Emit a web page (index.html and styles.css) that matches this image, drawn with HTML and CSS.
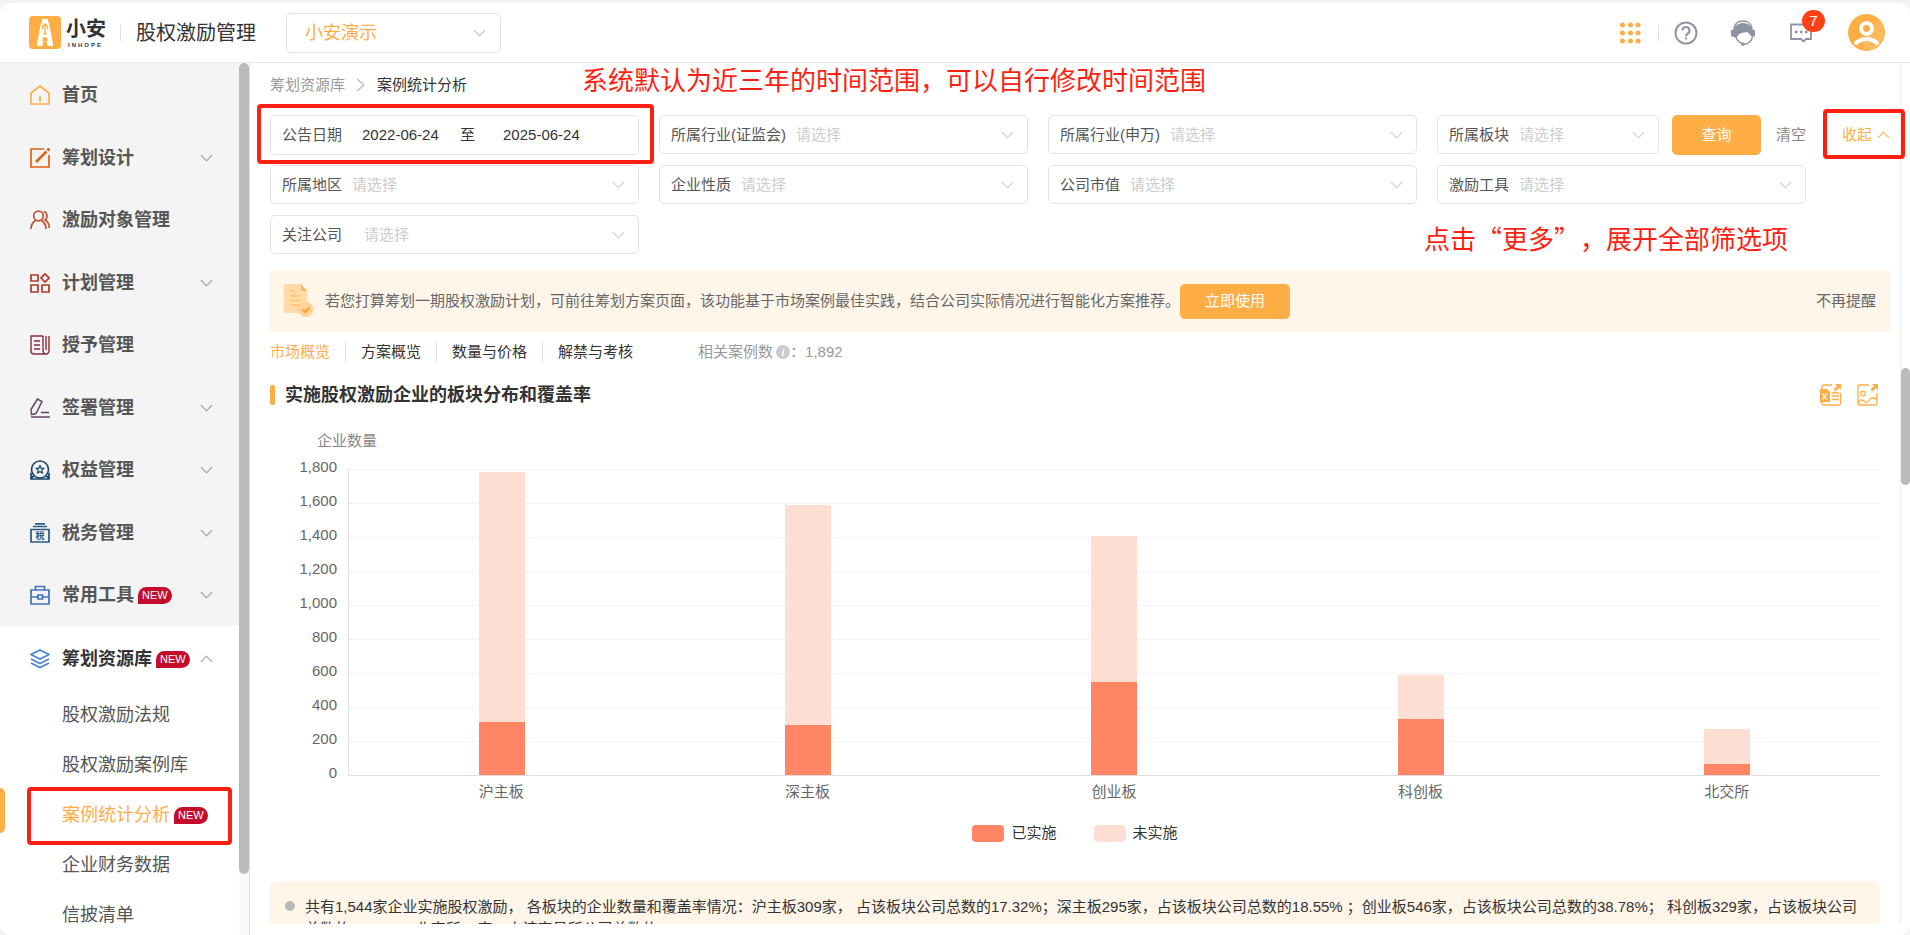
FILE: index.html
```html
<!DOCTYPE html>
<html lang="zh-CN">
<head>
  <meta charset="UTF-8">
  <meta name="viewport" content="width=device-width, initial-scale=1.0">
  <title>股权激励管理</title>
  <link rel="stylesheet" href="styles.css">
</head>
<body>
  <svg class="defs" aria-hidden="true">
    <symbol id="down" viewBox="0 0 14 8"><path d="M1 1l6 6 6-6" fill="none" stroke="currentColor" stroke-width="1.2"/></symbol>
    <symbol id="up" viewBox="0 0 14 8"><path d="M1 7l6-6 6 6" fill="none" stroke="currentColor" stroke-width="1.2"/></symbol>
  </svg>
  <div class="app">
    <header class="header">
      <div class="logo">
        <svg class="logo-mark" viewBox="0 0 32 33">
          <rect width="32" height="33" rx="4" fill="#ffae45"/>
          <path d="M13 3h6v3l1 1 4 21v2h-5.500l-.5-4h-4l-.5 4H8v-2L12 7l1-1z" fill="#fff"/>
          <path d="M16 9v9M13.500 13v-2.500L16 8l2.500 2.500V13M14.500 18h3" fill="none" stroke="#ffae45" stroke-width="1.300"/>
          <path d="M13.500 21.500h5v4h-5z" fill="#ffae45"/>
        </svg>
        <div class="logo-text"><b>小安</b><small>INHOPE</small></div>
      </div>
      <span class="divider"></span>
      <h1 class="app-title">股权激励管理</h1>
      <div class="company">
        <select aria-label="公司"><option>小安演示</option></select>
        <svg class="chev"><use href="#down"/></svg>
      </div>
      <div class="tools">
        <button class="tool" aria-label="应用">
          <svg width="21" height="22" viewBox="0 0 21 22" fill="#ffae45">
            <circle cx="2.500" cy="3" r="2.500"/><circle cx="10.500" cy="3" r="2.500"/><circle cx="18" cy="3" r="2.500"/>
            <circle cx="2.500" cy="11" r="2.500"/><circle cx="10.500" cy="11" r="2.500"/><circle cx="18" cy="11" r="2.500"/>
            <circle cx="2.500" cy="19" r="2.500"/><circle cx="10.500" cy="19" r="2.500"/><circle cx="18" cy="19" r="2.500"/>
          </svg>
        </button>
        <span class="divider tool-divider"></span>
        <button class="tool help" aria-label="帮助">
          <svg width="24" height="24" viewBox="0 0 24 24" fill="none" stroke="#8f94a3" stroke-width="2">
            <circle cx="12" cy="12" r="10.500"/>
            <path d="M8.500 9.500a3.500 3.500 0 1 1 5 3.200c-1 .6-1.500 1-1.500 2.500"/><path d="M12 16.500v2"/>
          </svg>
        </button>
        <button class="tool service" aria-label="客服">
          <svg width="26" height="26" viewBox="0 0 26 26" fill="none" stroke="#8f94a3">
            <path d="M4 10C4 4 8 1 13 1s9 3 9 9" stroke-width="1.500"/>
            <path d="M3.500 17C2.500 8 6 3 13 3s10.500 5 9.500 14C20.500 16 20 13.500 17 12c-4 1-8 0-10.500 6z" fill="#8f94a3" stroke="none"/>
            <path d="M2.500 10v6.500M23.500 10v6.500" stroke-width="3"/>
            <path d="M6 17c1 4 3.500 6 7 6.500" stroke-width="1.300"/>
            <path d="M22.500 16c-.5 5-4 8-9 8.500" stroke-width="1.500"/>
            <circle cx="13" cy="24.300" r="1.700" fill="#8f94a3" stroke="none"/>
          </svg>
        </button>
        <button class="tool message" aria-label="消息">
          <svg width="24" height="20" viewBox="0 0 24 20" fill="none" stroke="#8f94a3" stroke-width="1.800">
            <path d="M2 1.500h20v14.500h-5l-2.500 2.500-2.500-2.500H2z"/>
            <path d="M6 9h2.500M11 9h2.500M16 9h2.500" stroke-width="2.500"/>
          </svg>
          <span class="count">7</span>
        </button>
        <button class="tool avatar" aria-label="账号">
          <svg width="37" height="37" viewBox="0 0 37 37">
            <circle cx="18.500" cy="18.500" r="18.500" fill="#ffae45"/>
            <path d="M26 10l5-4c4 4 6 8 5.500 14-1 8-5 13-12 15.500l-9 1V28z" fill="#ffc06e" opacity=".6"/>
            <circle cx="18.500" cy="14.500" r="5.500" fill="none" stroke="#fff" stroke-width="4"/>
            <path d="M8 29c6-5.500 15-5.500 21 0" fill="none" stroke="#fff" stroke-width="4" stroke-linecap="round"/>
          </svg>
        </button>
      </div>
    </header>

    <div class="body">
      <nav class="sidebar">
        <div class="nav-group">
          <a class="nav-item" href="#">
            <svg class="nav-icon" viewBox="0 0 20 20" stroke="#ffae45"><path d="M1 8l9-7 9 7v11H1zM10 11v6"/></svg>
            <span>首页</span>
          </a>
          <a class="nav-item" href="#">
            <svg class="nav-icon" viewBox="0 0 20 20" stroke="#e2600f"><path d="M14 1H1v18h18V7"/><path d="M6 14L16.500 3.500" stroke-width="2.500"/><path d="M17.500 2.500L19.500.5" stroke-width="3"/></svg>
            <span>筹划设计</span><svg class="chev"><use href="#down"/></svg>
          </a>
          <a class="nav-item" href="#">
            <svg class="nav-icon" viewBox="0 0 20 20" stroke="#bc5230"><circle cx="8.500" cy="6" r="4.800"/><path d="M1 19c0-3.500 1.500-6.500 4.500-8.500M11.500 10.500C14.500 12.500 16 15.500 16 19M13.500 1.500c4 .5 4.500 6.500 1.500 8.500 3 1.500 4.200 4.500 4.200 8"/></svg>
            <span>激励对象管理</span>
          </a>
          <a class="nav-item" href="#">
            <svg class="nav-icon" viewBox="0 0 20 20" stroke="#b03a2a"><path d="M1 2h7v6H1zM1 12h7v7H1zM12 12h7v7h-7zM15 .8L19 5l-4 4-4-4z"/></svg>
            <span>计划管理</span><svg class="chev"><use href="#down"/></svg>
          </a>
          <a class="nav-item" href="#">
            <svg class="nav-icon" viewBox="0 0 20 20" stroke="#8b2c40"><path d="M13 1H1v15q0 3 3 3h13M13 1v14q0 4 3 4t3-4V1M16 1v14M4 6h6M4 10h6M4 14h6" stroke-width="1.400"/></svg>
            <span>授予管理</span>
          </a>
          <a class="nav-item" href="#">
            <svg class="nav-icon" viewBox="0 0 20 20" stroke="#6a4562"><path d="M1 19h19M11 14.500h8M7.500 1l4.500 2.500-6 12-4.500 1L1 11.500z" stroke-width="1.500"/></svg>
            <span>签署管理</span><svg class="chev"><use href="#down"/></svg>
          </a>
          <a class="nav-item" href="#">
            <svg class="nav-icon" viewBox="0 0 20 20" stroke="#1c466a"><circle cx="10" cy="9.500" r="8.500"/><path d="M10 5.800l1.100 2.300 2.600.4-1.900 1.800.5 2.600-2.300-1.200-2.300 1.200.5-2.600-1.900-1.800 2.600-.4z" stroke-width="1.300"/><path d="M1 13v6h18v-6M1 18l3-2M19 18l-3-2"/></svg>
            <span>权益管理</span><svg class="chev"><use href="#down"/></svg>
          </a>
          <a class="nav-item" href="#">
            <svg class="nav-icon" viewBox="0 0 20 20" stroke="#2b5a86"><path d="M5 .8h10M3 3.500h14M1 6.500h18v12.500H1z"/><text x="10" y="16" text-anchor="middle" font-size="9" font-weight="700" fill="#2b5a86" stroke="none">税</text></svg>
            <span>税务管理</span><svg class="chev"><use href="#down"/></svg>
          </a>
          <a class="nav-item" href="#">
            <svg class="nav-icon" viewBox="0 0 20 20" stroke="#3b73bb"><path d="M1 5h18v14H1zM5.500 5V1.500h9V5M1 12h6.500M12.500 12H19M8 10h4.500v4H8z"/></svg>
            <span>常用工具</span><em class="new">NEW</em><svg class="chev"><use href="#down"/></svg>
          </a>
        </div>
        <div class="nav-open">
          <a class="nav-item current" href="#">
            <svg class="nav-icon" viewBox="0 0 20 20" stroke="#4a86cf"><path d="M10 1l9 4.500-9 4.500-9-4.500zM1 10l9 4.500 9-4.500M1 14l9 4.500 9-4.500"/></svg>
            <span>筹划资源库</span><em class="new">NEW</em><svg class="chev"><use href="#up"/></svg>
          </a>
          <a class="sub-item" href="#">股权激励法规</a>
          <a class="sub-item" href="#">股权激励案例库</a>
          <a class="sub-item active" href="#">案例统计分析<em class="new">NEW</em><i class="mark mark-menu"></i></a>
          <a class="sub-item" href="#">企业财务数据</a>
          <a class="sub-item" href="#">信披清单</a>
        </div>
      </nav>
      <div class="side-scroll"><span></span></div>

      <main class="main">
        <p class="note note-date">系统默认为近三年的时间范围，可以自行修改时间范围</p>
        <p class="note note-more">点击“更多”，展开全部筛选项</p>

        <div class="crumb">
          <a href="#">筹划资源库</a>
          <svg width="10" height="14" viewBox="0 0 10 14"><path d="M1 1l7 6-7 6" fill="none" stroke="#bbb" stroke-width="1.300"/></svg>
          <span>案例统计分析</span>
        </div>

        <form class="filters">
          <div class="field date">
            <label for="from">公告日期</label>
            <input id="from" type="text" value="2022-06-24">
            <span>至</span>
            <input type="text" value="2025-06-24" aria-label="结束日期">
            <i class="mark mark-date"></i>
          </div>
          <div class="field"><label for="f1">所属行业(证监会)</label><select id="f1"><option>请选择</option></select><svg class="chev"><use href="#down"/></svg></div>
          <div class="field"><label for="f2">所属行业(申万)</label><select id="f2"><option>请选择</option></select><svg class="chev"><use href="#down"/></svg></div>
          <div class="actions">
            <div class="field"><label for="f3">所属板块</label><select id="f3"><option>请选择</option></select><svg class="chev"><use href="#down"/></svg></div>
            <button type="button" class="btn search">查询</button>
            <button type="reset" class="link-btn">清空</button>
            <button type="button" class="link-btn fold">收起<svg class="chev"><use href="#up"/></svg><i class="mark mark-fold"></i></button>
          </div>
          <div class="field"><label for="f4">所属地区</label><select id="f4"><option>请选择</option></select><svg class="chev"><use href="#down"/></svg></div>
          <div class="field"><label for="f5">企业性质</label><select id="f5"><option>请选择</option></select><svg class="chev"><use href="#down"/></svg></div>
          <div class="field"><label for="f6">公司市值</label><select id="f6"><option>请选择</option></select><svg class="chev"><use href="#down"/></svg></div>
          <div class="field"><label for="f7">激励工具</label><select id="f7"><option>请选择</option></select><svg class="chev"><use href="#down"/></svg></div>
          <div class="field follow"><label for="f8">关注公司</label><select id="f8"><option>请选择</option></select><svg class="chev"><use href="#down"/></svg></div>
        </form>

        <div class="banner">
          <svg width="30" height="34" viewBox="0 0 30 34">
            <path d="M0 2q0-2 2-2h15l6 6v23H2q-2 0-2-2z" fill="#ffdba8"/>
            <path d="M17 0l6 7h-6z" fill="#ffb959"/>
            <path d="M6 7h5M6 12h11M6 16.500h11M6 21h11" stroke="#ffc173" stroke-width="1.600"/>
            <circle cx="22" cy="25.500" r="7.500" fill="#ffd49a"/>
            <path d="M18.500 25.500l2.500 2.500 4.500-4.500" fill="none" stroke="#ffa02e" stroke-width="2"/>
          </svg>
          <p>若您打算筹划一期股权激励计划，可前往筹划方案页面，该功能基于市场案例最佳实践，结合公司实际情况进行智能化方案推荐。</p>
          <button type="button" class="btn use-now">立即使用</button>
          <button type="button" class="link-btn dismiss">不再提醒</button>
        </div>

        <div class="tabs">
          <a class="active" href="#">市场概览</a>
          <a href="#">方案概览</a>
          <a href="#">数量与价格</a>
          <a href="#">解禁与考核</a>
          <p class="total">相关案例数<i>i</i>：1,892</p>
        </div>

        <section>
          <div class="section-head">
            <h2>实施股权激励企业的板块分布和覆盖率</h2>
            <button type="button" class="tool" aria-label="导出表格">
              <svg width="22" height="22" viewBox="0 0 22 22" fill="none" stroke="#ffae45" stroke-width="1.300">
                <path d="M12 1H4q-2 0-2 2v2M2 17v2q0 2 2 2h15q1.500 0 1.500-2V9M11.500 9H19M11.500 12H19M11.500 15.500H19"/>
                <path d="M0 5h7l3 3v10H0z" fill="#ffae45" stroke="none"/>
                <path d="M2.500 9.500l4 6M6.500 9.500l-4 6" stroke="#fff"/>
                <path d="M14.500 6.500L19 2" stroke-width="3"/><path d="M15 0h6v6z" fill="#ffae45" stroke="none"/>
              </svg>
            </button>
            <button type="button" class="tool" aria-label="导出图片">
              <svg width="22" height="22" viewBox="0 0 22 22" fill="none" stroke="#ffae45" stroke-width="1.300">
                <path d="M12 1H3q-2 0-2 2v16q0 2 2 2h15q2 0 2-2V9M1 19c2-3 4-4 6-2s3 2 5-1 5-3 8 0"/>
                <circle cx="6" cy="9.500" r="2.300"/>
                <path d="M14.500 6.500L19 2" stroke-width="3"/><path d="M15 0h6v6z" fill="#ffae45" stroke="none"/>
              </svg>
            </button>
          </div>

          <div class="chart">
            <p class="axis-name">企业数量</p>
            <div class="chart-row">
              <div class="y-labels">
                <span>1,800</span><span>1,600</span><span>1,400</span><span>1,200</span><span>1,000</span><span>800</span><span>600</span><span>400</span><span>200</span><span>0</span>
              </div>
              <div class="plot">
                <div class="grid-line"></div><div class="grid-line"></div><div class="grid-line"></div>
                <div class="grid-line"></div><div class="grid-line"></div><div class="grid-line"></div>
                <div class="grid-line"></div><div class="grid-line"></div><div class="grid-line"></div>
                <div class="bars">
                  <div class="bar" style="height: 99.1%"><span style="height: 17.32%"></span></div>
                  <div class="bar" style="height: 88.3%"><span style="height: 18.55%"></span></div>
                  <div class="bar" style="height: 78.2%"><span style="height: 38.78%"></span></div>
                  <div class="bar" style="height: 32.8%"><span style="height: 55.73%"></span></div>
                  <div class="bar" style="height: 14.9%"><span style="height: 24.18%"></span></div>
                </div>
              </div>
            </div>
            <div class="x-labels"><span>沪主板</span><span>深主板</span><span>创业板</span><span>科创板</span><span>北交所</span></div>
            <div class="legend"><span>已实施</span><span class="rest">未实施</span></div>
          </div>

          <div class="summary">
            <p>共有1,544家企业实施股权激励， 各板块的企业数量和覆盖率情况：沪主板309家， 占该板块公司总数的17.32%；深主板295家，占该板块公司总数的18.55% ；创业板546家，占该板块公司总数的38.78%； 科创板329家，占该板块公司总数的55.73%；北交所65家，占该交易所公司总数的24.18%。</p>
          </div>
        </section>
      </main>
      <div class="main-scroll"><span></span></div>
    </div>
  </div>
</body>
</html>
```
FILE: styles.css
```css
* {
  box-sizing: border-box;
}

body {
  margin: 0;
  padding-top: 3px;
  height: 100vh;
  background: #f3f3f4;
  color: #333;
  font: 15px/22px "Liberation Sans", "Noto Sans CJK SC", sans-serif;
  overflow: hidden;
}

h1, h2, p {
  margin: 0;
}

a {
  color: inherit;
  text-decoration: none;
}

button, input, select {
  font: inherit;
  color: inherit;
  border: none;
  background: none;
  padding: 0;
  margin: 0;
}

button {
  cursor: pointer;
}

select {
  appearance: none;
  flex: 1;
  min-width: 0;
}

.defs {
  position: absolute;
  width: 0;
  height: 0;
}

.chev {
  width: 13px;
  height: 8px;
  flex: none;
  color: #999;
}

.app {
  height: 100%;
  display: flex;
  flex-direction: column;
  background: #fff;
  border-radius: 10px;
  overflow: hidden;
}

/* Header */
.header {
  height: 60px;
  flex: none;
  display: flex;
  align-items: center;
  padding: 0 25px 0 29px;
  border-bottom: 1px solid #e8e8e8;
}

.logo {
  display: flex;
  align-items: center;
  gap: 5px;
}

.logo-mark {
  width: 32px;
  height: 33px;
}

.logo-text {
  width: 40px;
  display: flex;
  flex-direction: column;
  color: #333;
}

.logo-text b {
  font-size: 20px;
  line-height: 24px;
}

.logo-text small {
  font-size: 6px;
  font-weight: bold;
  line-height: 8px;
  letter-spacing: 2px;
  padding-left: 2px;
}

.divider {
  width: 1px;
  height: 16px;
  margin: 0 15px 0 14px;
  background: #dcdfe6;
}

.app-title {
  font-size: 20px;
  font-weight: normal;
}

.company {
  width: 215px;
  height: 40px;
  margin-left: 30px;
  padding: 0 14px 0 18px;
  display: flex;
  align-items: center;
  border: 1px solid #e3e3e3;
  border-radius: 5px;
  color: #ffae45;
  font-size: 18px;
}

.company .chev {
  color: #bbb;
}

.tools {
  display: flex;
  align-items: center;
  margin-left: auto;
}

.tool {
  display: flex;
  position: relative;
}

.tool-divider {
  margin: 0 15px 0 17px;
}

.service {
  margin-left: 32px;
}

.message {
  margin-left: 33px;
}

.count {
  position: absolute;
  top: -13px;
  left: 13px;
  width: 23px;
  height: 22px;
  border-radius: 11px;
  background: #ff4218;
  color: #fff;
}

.avatar {
  margin-left: 35px;
}

/* Sidebar */
.body {
  flex: 1;
  min-height: 0;
  display: flex;
}

.sidebar {
  width: 239px;
  flex: none;
  font-size: 18px;
  overflow: hidden;
}

.nav-group {
  padding-top: 1px;
  background: #f4f4f4;
}

.nav-open {
  padding-top: 2px;
}

.nav-item {
  height: 62px;
  padding: 0 26px 0 30px;
  display: flex;
  align-items: center;
  color: #555;
  font-weight: bold;
}

.nav-group .nav-item:nth-child(even) {
  margin-top: 1px;
}

.nav-icon {
  width: 20px;
  height: 20px;
  margin-right: 12px;
  fill: none;
  stroke-width: 1.700;
}

.nav-item .chev {
  margin-left: auto;
}

.current {
  color: #333;
}

.new {
  height: 17px;
  margin-left: 4px;
  padding: 0 4px;
  border-radius: 9px 9px 9px 0;
  background: #c40d2c;
  color: #fff;
  font: 11px/17px "Liberation Sans", sans-serif;
}

.sub-item {
  height: 50px;
  padding-left: 62px;
  display: flex;
  align-items: center;
  position: relative;
  color: #555;
}

.sub-item.active {
  color: #ffae45;
}

.sub-item.active::before {
  content: "";
  position: absolute;
  left: 0;
  top: -2px;
  width: 5px;
  height: 45px;
  border-radius: 0 5px 5px 0;
  background: #ffae45;
}

.side-scroll {
  width: 11px;
  flex: none;
  border-right: 1px solid #e4e4e4;
  background: #fafafa;
}

.side-scroll span {
  display: block;
  height: 93%;
  border-radius: 5px;
  background: #bbb;
}

/* Red callouts drawn over the page */
.mark {
  position: absolute;
  border: 4px solid #ff1f12;
  border-radius: 4px;
  pointer-events: none;
}

.mark-menu {
  inset: -3px 7px -5px 27px;
}

.mark-date {
  inset: -12px -16px -10px -14px;
}

.mark-fold {
  inset: -15px -15px -13px -19px;
}

.note {
  position: absolute;
  color: #ff1f12;
  font: 26px/32px "Noto Sans CJK SC", sans-serif;
  text-spacing-trim: space-all;
  white-space: nowrap;
}

.note-date {
  left: 332px;
  top: 0;
}

.note-more {
  right: 112px;
  top: 159px;
}

/* Main */
.main {
  flex: 1;
  min-width: 0;
  position: relative;
  margin-bottom: 11px;
  padding: 11px 10px 0 20px;
  overflow-x: visible;
  overflow-y: clip;
}

.crumb {
  display: flex;
  align-items: center;
  gap: 11px;
  color: #999;
}

.crumb span {
  color: #333;
}

.filters {
  display: grid;
  grid-template-columns: repeat(4, 369fr) 64px;
  grid-auto-rows: 40px;
  align-items: start;
  gap: 10px 20px;
  margin-top: 19px;
}

.field {
  height: 39px;
  padding: 0 13px 0 11px;
  display: flex;
  align-items: center;
  gap: 10px;
  position: relative;
  border: 1px solid #e3e3e3;
  border-radius: 5px;
  color: #ccc;
}

.field label {
  color: #555;
}

.field .chev {
  color: #ccc;
}

.date,
.date span {
  color: #333;
}

.date {
  height: 40px;
  gap: 20px;
}

.date input {
  width: 78px;
}

.date span {
  margin-right: 8px;
}

.follow {
  grid-column: 1;
  gap: 22px;
}

.actions {
  grid-column: 4 / 6;
  display: flex;
  align-items: center;
}

.actions .field {
  flex: 1;
  align-self: flex-start;
}

.btn {
  border-radius: 5px;
  background: #ffae45;
  color: #fff;
}

.search {
  width: 89px;
  height: 40px;
  margin: 0 15px 0 13px;
}

.link-btn {
  color: #888;
}

.fold {
  position: relative;
  display: flex;
  align-items: center;
  gap: 5px;
  margin-left: 36px;
  color: #ffae45;
}

.fold .chev {
  color: #ffae45;
}

.banner {
  height: 62px;
  margin-top: 15px;
  padding: 0 14px;
  display: flex;
  align-items: center;
  background: #fff5e9;
  color: #666;
}

.banner p {
  margin-left: 11px;
}

.use-now {
  width: 110px;
  height: 35px;
}

.dismiss {
  margin-left: auto;
  color: #666;
}

.tabs {
  display: flex;
  align-items: center;
  margin-top: 9px;
}

.tabs a {
  padding-right: 15px;
  margin-right: 15px;
  line-height: 20px;
  border-right: 1px solid #e3e3e3;
}

.tabs a:nth-child(4) {
  border-right: none;
}

.tabs .active {
  color: #ffae45;
}

.total {
  margin-left: 35px;
  display: flex;
  align-items: center;
  color: #999;
}

.total i {
  width: 14px;
  height: 14px;
  margin-left: 3px;
  border-radius: 50%;
  background: #ccc;
  color: #fff;
  font: italic bold 11px/14px "Liberation Serif", serif;
  text-align: center;
}

.section-head {
  display: flex;
  align-items: center;
  gap: 15px;
  margin-top: 21px;
  padding-right: 11px;
}

.section-head h2 {
  flex: 1;
  display: flex;
  align-items: center;
  gap: 10px;
  font-size: 18px;
  line-height: 22px;
}

.section-head h2::before {
  content: "";
  width: 5px;
  height: 20px;
  border-radius: 2px;
  background: #ffae45;
}

/* Chart */
.chart {
  padding: 24px 10px 0 0;
  color: #666;
}

.axis-name {
  padding-left: 47px;
  color: #888;
}

.chart-row {
  display: flex;
  margin-top: 17px;
}

.y-labels {
  width: 78px;
  margin: -13px 0 -21px;
  padding-right: 11px;
  text-align: right;
}

.y-labels span {
  display: block;
  height: 34px;
}

.plot {
  flex: 1;
  align-self: flex-start;
  position: relative;
  border-left: 1px solid #e3e3e3;
  border-bottom: 1px solid #ddd;
}

.grid-line {
  height: 34px;
  background: repeating-linear-gradient(to right, #eee 0 5px, transparent 5px 8px) top / 100% 1px no-repeat;
}

.bars {
  position: absolute;
  inset: 0;
  display: flex;
  justify-content: space-around;
  align-items: flex-end;
}

.bar {
  width: 46px;
  display: flex;
  align-items: flex-end;
  background: #ffded4;
}

.bar span {
  width: 100%;
  background: #ff8564;
}

.x-labels {
  display: flex;
  margin: 5px 0 0 78px;
}

.x-labels span {
  flex: 1;
  text-align: center;
}

.legend {
  display: flex;
  justify-content: center;
  gap: 37px;
  margin-top: 19px;
  color: #333;
}

.legend span {
  display: flex;
  align-items: center;
  gap: 7px;
}

.legend span::before {
  content: "";
  width: 32px;
  height: 17px;
  border-radius: 4px;
  background: #ff8564;
}

.legend .rest::before {
  background: #ffded4;
}

.summary {
  margin: 37px 10px 0 0;
  padding: 15px 15px 15px 35px;
  position: relative;
  border-radius: 6px;
  background: #fff5e9;
}

.summary::before {
  content: "";
  position: absolute;
  left: 15px;
  top: 20px;
  width: 10px;
  height: 10px;
  border-radius: 50%;
  background: #b8b8b8;
}

.main-scroll {
  width: 10px;
  flex: none;
  margin-bottom: 11px;
  padding-top: 305px;
  border-left: 1px solid #eee;
}

.main-scroll span {
  display: block;
  height: 117px;
  border-radius: 5px;
  background: #bbb;
}
```
